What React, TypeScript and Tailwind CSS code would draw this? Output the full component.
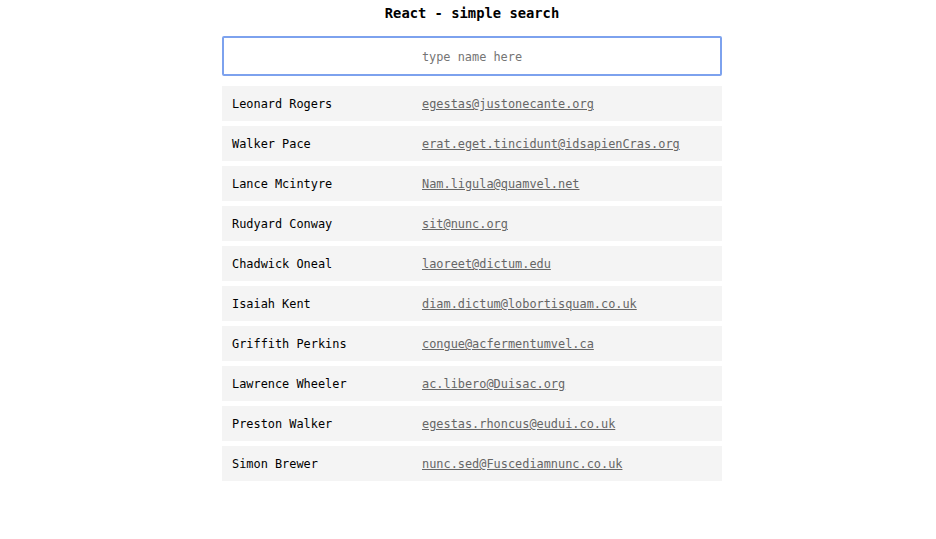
import { useState } from "react";

type Person = {
  name: string;
  email: string;
};

const people: Person[] = [
  { name: "Leonard Rogers", email: "egestas@justonecante.org" },
  { name: "Walker Pace", email: "erat.eget.tincidunt@idsapienCras.org" },
  { name: "Lance Mcintyre", email: "Nam.ligula@quamvel.net" },
  { name: "Rudyard Conway", email: "sit@nunc.org" },
  { name: "Chadwick Oneal", email: "laoreet@dictum.edu" },
  { name: "Isaiah Kent", email: "diam.dictum@lobortisquam.co.uk" },
  { name: "Griffith Perkins", email: "congue@acfermentumvel.ca" },
  { name: "Lawrence Wheeler", email: "ac.libero@Duisac.org" },
  { name: "Preston Walker", email: "egestas.rhoncus@eudui.co.uk" },
  { name: "Simon Brewer", email: "nunc.sed@Fuscediamnunc.co.uk" },
];

const App = () => {
  const [query, setQuery] = useState("");

  const filtered = people.filter((p) =>
    p.name.toLowerCase().includes(query.toLowerCase())
  );

  return (
    <div className="min-h-screen bg-white pl-[8px] font-['DejaVu_Sans_Mono','Liberation_Mono',monospace] text-black">
      <div className="mx-auto w-[500px] pt-[5px]">
        <h1 className="text-center text-[13.8px] font-bold leading-[17px]">
          React - simple search
        </h1>

        <input
          value={query}
          onChange={(e) => setQuery(e.target.value)}
          placeholder="type name here"
          className="mt-[14px] block h-[40px] w-full rounded-[2px] border-2 border-[#7da2ee] bg-white pt-[2px] text-center text-[11.9px] outline-none placeholder:text-[#757575]"
        />

        <ul className="mt-[10px] flex flex-col gap-[5px]">
          {filtered.map((p) => (
            <li
              key={p.email}
              className="flex h-[35px] items-center bg-[#f4f4f4] px-[10px] pt-[3px] text-[11.9px]"
            >
              <span className="w-[190px] shrink-0">{p.name}</span>
              <a
                href={`mailto:${p.email}`}
                className="text-[#666666] underline"
              >
                {p.email}
              </a>
            </li>
          ))}
        </ul>
      </div>
    </div>
  );
};

export default App;
